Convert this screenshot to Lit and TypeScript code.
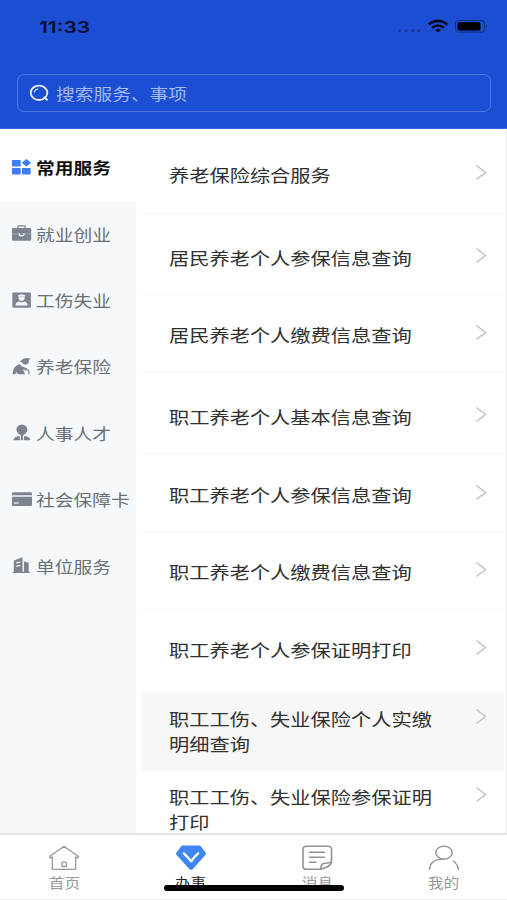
import { LitElement, html, css, svg } from "lit";
import { customElement } from "lit/decorators.js";
import { classMap } from "lit/directives/class-map.js";

const icons = {
  grid: svg`<g fill="#3b7ff0"><rect x="0" y="1" width="8.7" height="6.6" rx=".8"/><rect x="0" y="9" width="8.7" height="6.6" rx=".8"/><rect x="10" y="9" width="8.7" height="6.6" rx=".8"/><path d="M14.4 0l4.6 3.8-4.6 3.8-4.6-3.8z"/></g>`,
  bag: svg`<path d="M6 3.2V1.6Q6 .9 6.8.9H12.400Q13.200.9 13.200 1.600V3.200" fill="none" stroke="#7e8390" stroke-width="1.300"/><path fill="#7e8390" d="M1.200 3H18Q19.200 3 19.200 4V15Q19.200 15.700 18 15.700H1.200Q0 15.700 0 15V4Q0 3 1.200 3z"/><path d="M0 8.800L6.800 9.300M12.400 9.300L19.200 8.800" stroke="#b4b9c2" stroke-width=".7"/><path d="M7 8.200Q7.300 10.800 9.600 10.800T12.200 8.200" fill="none" stroke="#f5f8fb" stroke-width="1.300"/>`,
  badge: svg`<rect x=".3" y=".5" width="18.600" height="15.200" rx="1.200" fill="#7e8390"/><path fill="#f5f8fb" d="M5.800 3.200l3.800-1 3.800 1-.7 1.600v1.800Q12 9 9.600 9T6.500 6.600V4.800z"/><path fill="#f5f8fb" d="M3.400 13.600Q3.600 10.300 7.200 9.500L9.600 10.600l2.400-1.100q3.600.8 3.800 4.100z"/><path d="M6.700 4.800h5.800" stroke="#a9adb7" stroke-width=".6"/>`,
  elder: svg`<path fill="#7e8390" d="M8.500 3Q11 .1 14.500 0L18.400.6 16.800 2.300Q17.300 6.200 13.800 6.600 10.700 6.700 10 4.300L8 3.800z"/><path fill="#7e8390" d="M.6 16.200Q.8 8 7.700 6L9.800 8.500 15.200 10.300 14.200 12 11 11.600 13 16.200H6.700L4 14.200 3.400 16.200z"/><path d="M13.200 12.200q3.600-1.300 3.700 1v3" fill="none" stroke="#7e8390" stroke-width="1.200"/>`,
  talent: svg`<ellipse cx="9.900" cy="5.600" rx="5.500" ry="5.200" fill="#7e8390"/><path fill="#7e8390" d="M8 10h3.800l-1 2.800.4 3.500H8.600l.4-3.500zM1.400 16.300q.3-3 3.600-3.900l2.600-.5.400 4.400zM18.400 16.300q-.3-3-3.600-3.900l-2.600-.5-.4 4.400z"/>`,
  card: svg`<path fill="#7e8390" d="M1.200 1.200H18.700Q20 1.200 20 2.500V4.300H0V2.500Q0 1.200 1.200 1.200zM0 5.700H20V13.800Q20 15.100 18.700 15.100H1.200Q0 15.100 0 13.800z"/><path d="M2 12h4.600" stroke="#f5f8fb" stroke-width="1.200"/>`,
  building: svg`<path fill="#7e8390" fill-rule="evenodd" d="M1.800 3.600L10.500.2V14.800H11.900V4.300L16.700 5.800V14.800H17.900V15.900H.7V14.800H1.800zM4.200 5.300V6.500L8.300 5.700V4.500zM4.200 8.600V9.800L8.300 9.300V8.100z"/>`,
};

const categories: { icon: keyof typeof icons; label: string }[] = [
  { icon: "grid", label: "常用服务" },
  { icon: "bag", label: "就业创业" },
  { icon: "badge", label: "工伤失业" },
  { icon: "elder", label: "养老保险" },
  { icon: "talent", label: "人事人才" },
  { icon: "card", label: "社会保障卡" },
  { icon: "building", label: "单位服务" },
];

const services: { lines: string[]; kind?: string }[] = [
  { lines: ["养老保险综合服务"], kind: "first" },
  { lines: ["居民养老个人参保信息查询"], kind: "tall" },
  { lines: ["居民养老个人缴费信息查询"] },
  { lines: ["职工养老个人基本信息查询"], kind: "tall" },
  { lines: ["职工养老个人参保信息查询"] },
  { lines: ["职工养老个人缴费信息查询"] },
  { lines: ["职工养老个人参保证明打印"], kind: "last-single" },
  { lines: ["职工工伤、失业保险个人实缴", "明细查询"], kind: "pressed" },
  { lines: ["职工工伤、失业保险参保证明", "打印"], kind: "double" },
];

const tabs = [
  {
    label: "首页",
    icon: svg`<g fill="none" stroke="#999" stroke-width="1.300" stroke-linejoin="round"><path d="M4.300 12.500V25.300H27.700V12.500M1.300 12.800L16 2.300 30.700 12.800 29.300 14 27.700 12.800M1.300 12.800L2.700 14 4.300 12.800"/><path d="M14 22.500V19.500q0-1.700 2.200-1.700t2.200 1.700v3z"/></g>`,
  },
  {
    label: "办事",
    active: true,
    icon: svg`<path fill="#3d86f5" d="M7.800 1.600H24.200q1 0 1.700.8L30.600 8.600q.9 1.200-.2 2.400L17.800 25q-1.700 1.700-3.500 0L1.600 11Q.5 9.800 1.400 8.600L6.100 2.400q.7-.8 1.700-.8z"/><path d="M8.800 9.300q3.700 3.300 7.400 8 3-4.700 7-8" fill="none" stroke="#fff" stroke-width="2.300" stroke-linecap="round" stroke-linejoin="round"/>`,
  },
  {
    label: "消息",
    icon: svg`<g fill="none" stroke="#929292" stroke-width="1.600" stroke-linecap="round" stroke-linejoin="round"><path d="M20 25.300H5.500Q2 25.300 2 22.300V5.200Q2 2.200 5.500 2.200H27Q30.500 2.200 30.500 5.200V18.300Q29.500 22.500 20 25.300 19.600 23.800 20.300 21.500 21 19.300 24 19.300 28.500 19.300 30.500 17.500"/><path d="M8.500 8.200H23.500M8.500 13.200H23.500M8.500 18.200H15"/></g>`,
  },
  {
    label: "我的",
    icon: svg`<g fill="none" stroke="#929292" stroke-width="1.400" stroke-linecap="round"><ellipse cx="16" cy="8.600" rx="8.200" ry="6.500"/><path d="M1.500 25.300Q2.300 14.800 16 15.100M25.500 17.300Q29.800 20.300 30.300 25.300"/></g>`,
  },
];

@customElement("app-root")
export class AppRoot extends LitElement {
  static styles = css`
    :host {
      display: flex;
      flex-direction: column;
      box-sizing: border-box;
      width: 507px;
      height: 900px;
      overflow: hidden;
      position: relative;
      background: #fff;
      font-family: "Noto Sans CJK SC", sans-serif;
    }
    svg { display: block; flex: none; }
    .wide {
      display: block;
      white-space: nowrap;
      transform: scaleX(1.17);
      transform-origin: left center;
    }
    .header {
      flex: none;
      box-sizing: border-box;
      height: 129px;
      background: #1c4ed3;
      border-bottom: 1px solid #3c67da;
    }
    .status {
      display: flex;
      align-items: center;
      justify-content: space-between;
      height: 54px;
      padding: 0 19px 0 38.500px;
    }
    .time {
      font: 600 16.500px/20px Inter, sans-serif;
      color: #040d34;
      transform: scaleX(1.27);
      transform-origin: left center;
    }
    .search {
      display: flex;
      align-items: center;
      gap: 7.500px;
      box-sizing: border-box;
      height: 38px;
      margin: 20px 16px 0 17px;
      padding-left: 10.500px;
      border: 1.500px solid #4e78e2;
      border-radius: 7px;
      color: #a3b9f1;
      font-size: 16px;
      line-height: 24px;
    }
    .body {
      flex: 1;
      min-height: 0;
      display: flex;
      border-right: 1px solid #eee;
      overflow: hidden;
    }
    .side {
      flex: none;
      width: 136px;
      background: #f5f9fb;
    }
    .cat {
      display: flex;
      align-items: center;
      gap: 4px;
      box-sizing: border-box;
      height: 66.400px;
      padding: 0 0 2px 12px;
      color: #6b6e74;
      font-size: 16px;
      line-height: 24px;
    }
    .cat.on {
      height: 72.500px;
      padding-top: 6px;
      background: #fff;
      color: #111;
      font-weight: 700;
    }
    .list {
      flex: 1;
      padding: 0 2px 0 6px;
    }
    .row {
      display: flex;
      justify-content: space-between;
      align-items: flex-start;
      box-sizing: border-box;
      height: 77.600px;
      padding: 28.300px 17.500px 0 26.500px;
      border-bottom: 1px solid #f5f5f5;
      color: #303030;
      font-size: 17.300px;
      line-height: 24.600px;
    }
    .row.first { height: 84.500px; padding-top: 34.300px; }
    .row.tall { height: 81.700px; padding-top: 32.300px; }
    .row.last-single { height: 82.500px; border-color: transparent; }
    .row.pressed { height: 77.500px; background: #f7f7f7; padding-top: 15.300px; }
    .row.double { height: 90px; padding-top: 15.300px; }
    .chev { margin-top: 1px; }
    .tabs {
      flex: none;
      display: flex;
      box-sizing: border-box;
      height: 67px;
      padding-left: 1px;
      border-top: 2px solid #e4e5e7;
      border-bottom: 1px solid #eee;
      background: #fff;
    }
    .tab {
      flex: 1;
      display: flex;
      flex-direction: column;
      align-items: center;
      padding-top: 9px;
      color: #999;
      font-size: 13.400px;
      line-height: 20px;
    }
    .tab .wide { transform-origin: center; }
    .tab.on { color: #222; }
    .home {
      position: absolute;
      left: 164px;
      bottom: 9px;
      width: 180px;
      height: 6px;
      border-radius: 3px;
      background: #000;
    }
  `;

  render() {
    return html`
      <div class="header">
        <div class="status">
          <span class="time">11:33</span>
          <svg width="92" height="20" viewBox="0 0 92 20">
            <g fill="#153a9e"><circle cx="3.500" cy="13.500" r="1.500"/><circle cx="10" cy="13.500" r="1.500"/><circle cx="16.500" cy="13.500" r="1.500"/><circle cx="22.500" cy="13.500" r="1.500"/></g>
            <g fill="none" stroke="#020a26" stroke-width="2.500"><path d="M32.700 7.600Q42 .2 51.300 7.600"/><path d="M36 10.800Q42 6.200 48 10.800"/></g>
            <path d="M38.900 13Q42 10.500 45.100 13L42 15.500z" fill="#020a26"/>
            <rect x="59.500" y="3.600" width="29" height="11.600" rx="3.500" fill="none" stroke="#12358f" stroke-width="1.200"/>
            <rect x="61.500" y="5.200" width="23" height="8.400" rx="1.800" fill="#000"/>
            <path d="M90 7.500q2 1.900 0 3.800z" fill="#12358f"/>
          </svg>
        </div>
        <div class="search">
          <svg width="20" height="18" viewBox="0 0 20 18" fill="none" stroke="#e7edff" stroke-linecap="round">
            <ellipse cx="10" cy="8.800" rx="8.300" ry="7.200" stroke-width="1.900"/>
            <path d="M15.300 13.500L18 15.700" stroke-width="2"/>
            <path d="M5.200 8.200Q5.800 5.600 8.600 5" stroke-width="1.100"/>
          </svg>
          <span class="wide">搜索服务、事项</span>
        </div>
      </div>
      <div class="body">
        <div class="side">
          ${categories.map(
            (c, i) => html`<div class=${classMap({ cat: true, on: i === 0 })}>
              <svg width="20" height="17" viewBox="0 0 20 17">${icons[c.icon]}</svg>
              <span class="wide">${c.label}</span>
            </div>`
          )}
        </div>
        <div class="list">
          ${services.map(
            (s) => html`<div class="row ${s.kind ?? ""}">
              <div>${s.lines.map((l) => html`<span class="wide">${l}</span>`)}</div>
              <svg class="chev" width="12" height="17" viewBox="0 0 12 17" fill="none" stroke="#c2c2c2" stroke-width="1.500"><path d="M1.500 1.500L10.500 8.500 1.500 15.500"/></svg>
            </div>`
          )}
        </div>
      </div>
      <div class="tabs">
        ${tabs.map(
          (t) => html`<div class=${classMap({ tab: true, on: !!t.active })}>
            <svg width="32" height="28" viewBox="0 0 32 28">${t.icon}</svg>
            <span class="wide">${t.label}</span>
          </div>`
        )}
      </div>
      <div class="home"></div>
    `;
  }
}
